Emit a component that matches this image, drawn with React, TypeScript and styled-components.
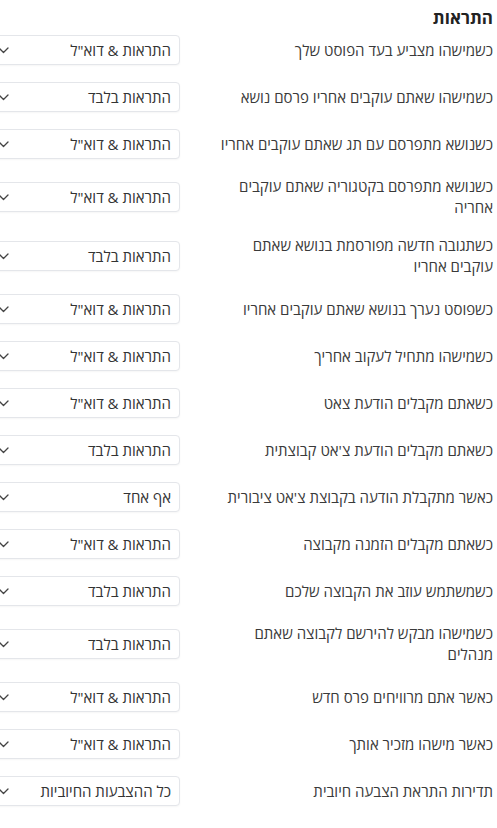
import React from "react";
import styled, { createGlobalStyle } from "styled-components";

const GlobalStyle = createGlobalStyle`
  html { direction: rtl; overflow-x: hidden; }
  body {
    margin: 0;
    background: #ffffff;
    font-family: "Open Sans", "Noto Sans", "DejaVu Sans", sans-serif;
    color: #333333;
    overflow-x: hidden;
  }
`;

const Page = styled.div`
  direction: rtl;
  width: 517px;
  box-sizing: border-box;
  padding: 6px 4px 20px 0;
`;

const Title = styled.h3`
  margin: 0 0 5px 0;
  font-size: 17px;
  line-height: 24px;
  font-weight: 700;
  color: #222222;
`;

const List = styled.div`
  display: flex;
  flex-direction: column;
  gap: 17px;
`;

const Row = styled.div`
  display: grid;
  grid-template-columns: 1fr 200px;
  column-gap: 31px;
  align-items: center;
`;

const Label = styled.div`
  font-size: 15px;
  line-height: 21px;
  color: #3a3a3a;
`;

const SelectBox = styled.div`
  height: 30px;
  box-sizing: border-box;
  display: flex;
  align-items: center;
  justify-content: space-between;
  padding: 0 8px 0 17px;
  border: 1px solid #e4e6ea;
  border-radius: 4px;
  background: #ffffff;
  box-shadow: 0 1px 2px rgba(0, 0, 0, 0.04);
  font-size: 15px;
  color: #333333;
`;

const Chevron = () => (
  <svg width="11" height="7" viewBox="0 0 11 7" fill="none">
    <path d="M1 1l4.5 4.5L10 1" stroke="#444" strokeWidth="1.3" strokeLinecap="round" strokeLinejoin="round" />
  </svg>
);

const BOTH = 'התראות & דוא"ל';
const ONLY = "התראות בלבד";

const rows: { label: string; value: string }[] = [
  { label: "כשמישהו מצביע בעד הפוסט שלך", value: BOTH },
  { label: "כשמישהו שאתם עוקבים אחריו פרסם נושא", value: ONLY },
  { label: "כשנושא מתפרסם עם תג שאתם עוקבים אחריו", value: BOTH },
  { label: "כשנושא מתפרסם בקטגוריה שאתם עוקבים אחריה", value: BOTH },
  { label: "כשתגובה חדשה מפורסמת בנושא שאתם עוקבים אחריו", value: ONLY },
  { label: "כשפוסט נערך בנושא שאתם עוקבים אחריו", value: BOTH },
  { label: "כשמישהו מתחיל לעקוב אחריך", value: BOTH },
  { label: "כשאתם מקבלים הודעת צאט", value: BOTH },
  { label: "כשאתם מקבלים הודעת צ'אט קבוצתית", value: ONLY },
  { label: "כאשר מתקבלת הודעה בקבוצת צ'אט ציבורית", value: "אף אחד" },
  { label: "כשאתם מקבלים הזמנה מקבוצה", value: BOTH },
  { label: "כשמשתמש עוזב את הקבוצה שלכם", value: ONLY },
  { label: "כשמישהו מבקש להירשם לקבוצה שאתם מנהלים", value: ONLY },
  { label: "כאשר אתם מרוויחים פרס חדש", value: BOTH },
  { label: "כאשר מישהו מזכיר אותך", value: BOTH },
  { label: "תדירות התראת הצבעה חיובית", value: "כל ההצבעות החיוביות" },
];

export default function App() {
  return (
    <Page>
      <GlobalStyle />
      <Title>התראות</Title>
      <List>
        {rows.map((r, i) => (
          <Row key={i}>
            <Label>{r.label}</Label>
            <SelectBox>
              <span>{r.value}</span>
              <Chevron />
            </SelectBox>
          </Row>
        ))}
      </List>
    </Page>
  );
}
